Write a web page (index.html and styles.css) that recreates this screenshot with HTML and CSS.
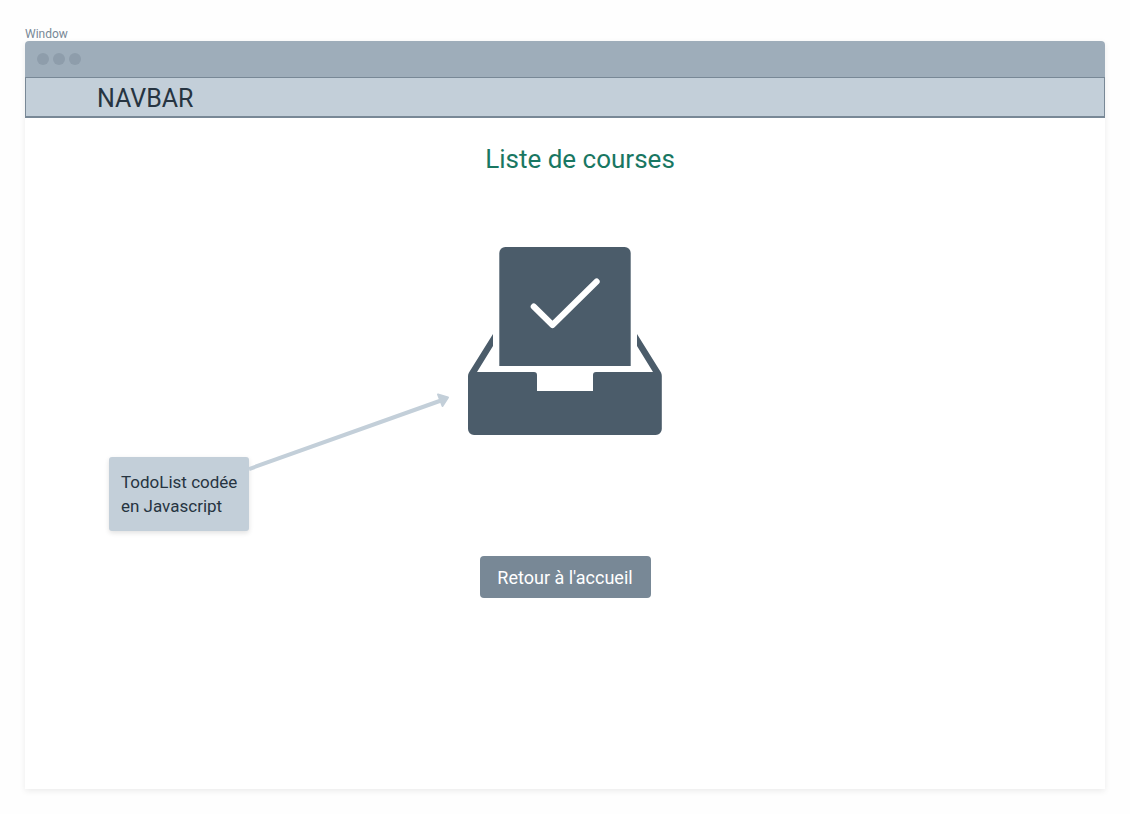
FILE: index.html
```html
<!DOCTYPE html>
<html lang="fr">
<head>
<meta charset="utf-8">
<meta name="viewport" content="width=device-width, initial-scale=1">
<title>Liste de courses</title>
<link rel="stylesheet" href="styles.css">
</head>
<body>
<div class="page">
  <div class="window-label">Window</div>
  <div class="window">
    <div class="titlebar">
      <span class="dot"></span>
      <span class="dot"></span>
      <span class="dot"></span>
    </div>
    <header class="navbar">NAVBAR</header>
    <main class="content">
      <h1 class="title">Liste de courses</h1>
      <svg class="tray" viewBox="0 0 194 188" role="img" aria-label="Liste">
        <path d="M31.3 119V6a6 6 0 0 1 6-6h119.400a6 6 0 0 1 6 6v113z"/>
        <path fill-rule="evenodd" d="M25 87V99L9 125H66a3 3 0 0 1 3 3V144H125V128a3 3 0 0 1 3-3H185L169 99V87L193 125.500Q193.800 127 193.800 129V182a6 6 0 0 1-6 6H6a6 6 0 0 1-6-6V129Q0 127 1 125.500Z"/>
        <path class="tray-check" d="M65.700 59.500L84.500 78L128.700 34.500"/>
      </svg>
      <button class="back" type="button">Retour à l'accueil</button>
      <div class="annotation">
        <p class="note">TodoList codée<br>en Javascript</p>
        <svg class="arrow" viewBox="0 0 202 80" aria-hidden="true">
          <path class="arrow-line" d="M0 78L192 9.500"/>
          <path class="arrow-head" d="M189 3.500L199 6.500L193.500 15Z"/>
        </svg>
      </div>
    </main>
  </div>
</div>
</body>
</html>
```
FILE: styles.css
```css
* {
  box-sizing: border-box;
}

body {
  margin: 0;
  background: #fefefe;
  color: #263441;
  font-family: Roboto, "Liberation Sans", sans-serif;
}

.page {
  display: flex;
  flex-direction: column;
  min-height: 100vh;
  padding: 25px;
}

.window-label {
  padding-top: 2px;
  color: #788896;
  font-size: 12px;
  line-height: 14px;
}

.window {
  display: flex;
  flex: 1;
  flex-direction: column;
  border-radius: 4px 4px 0 0;
  background: #fff;
  box-shadow: 0 2px 6px rgba(0, 0, 0, 0.08);
}

.titlebar {
  display: flex;
  align-items: center;
  gap: 4px;
  height: 36px;
  padding: 0 12px;
  border-radius: 4px 4px 0 0;
  background: #9eadba;
}

.dot {
  width: 12px;
  height: 12px;
  border-radius: 50%;
  background: #8e9dab;
}

.navbar {
  padding: 5px 71px 1px;
  border: 1px solid #788896;
  border-bottom-width: 2px;
  background: #c3cfd9;
  font-size: 25px;
  line-height: 32px;
}

.content {
  position: relative;
  display: flex;
  flex: 1;
  flex-direction: column;
  align-items: center;
  padding: 25px 0;
}

.title {
  margin: 0 0 72px;
  padding-left: 30px;
  color: #197762;
  font-size: 26px;
  font-weight: 400;
  line-height: 32px;
}

.tray {
  width: 194px;
  height: 188px;
  fill: #4b5c6a;
}

.tray-check {
  fill: none;
  stroke: #fff;
  stroke-width: 6;
  stroke-linecap: round;
  stroke-linejoin: round;
}

.back {
  width: 171px;
  height: 42px;
  margin-top: 121px;
  padding: 0;
  border: 0;
  border-radius: 4px;
  background: #788896;
  color: #fff;
  font: inherit;
  font-size: 18px;
}

.annotation {
  position: absolute;
  top: 273px;
  left: calc(50% - 456px);
  display: flex;
  align-items: flex-start;
}

.note {
  width: 140px;
  margin: 66px 0 0;
  padding: 13px 12px;
  border-radius: 3px;
  background: #c3cfd9;
  box-shadow: 0 2px 5px rgba(0, 0, 0, 0.12);
  font-size: 17px;
  line-height: 24px;
  white-space: nowrap;
}

.arrow {
  width: 202px;
  height: 80px;
}

.arrow-line {
  fill: none;
  stroke: #c3cfd9;
  stroke-width: 4;
}

.arrow-head {
  fill: #c3cfd9;
  stroke: #c3cfd9;
  stroke-width: 2;
  stroke-linejoin: round;
}
```
